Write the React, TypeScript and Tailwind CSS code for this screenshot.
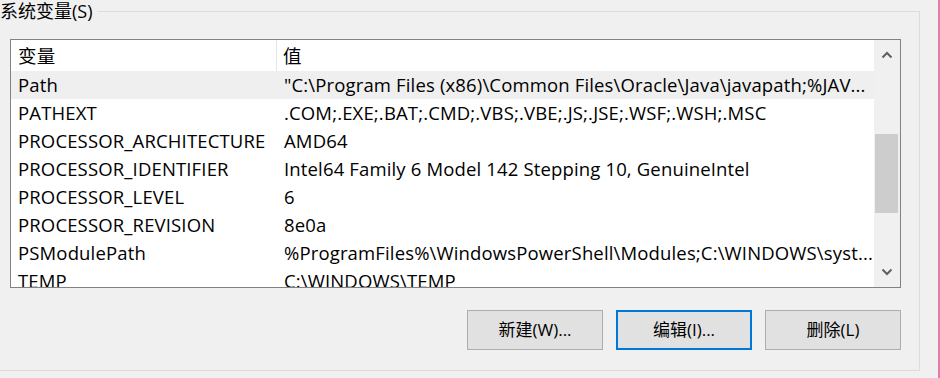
import React from 'react';

const rows: [string, string][] = [
    ['Path', String.raw`"C:\Program Files (x86)\Common Files\Oracle\Java\javapath;%JAV...`],
    ['PATHEXT', '.COM;.EXE;.BAT;.CMD;.VBS;.VBE;.JS;.JSE;.WSF;.WSH;.MSC'],
    ['PROCESSOR_ARCHITECTURE', 'AMD64'],
    ['PROCESSOR_IDENTIFIER', 'Intel64 Family 6 Model 142 Stepping 10, GenuineIntel'],
    ['PROCESSOR_LEVEL', '6'],
    ['PROCESSOR_REVISION', '8e0a'],
    ['PSModulePath', String.raw`%ProgramFiles%\WindowsPowerShell\Modules;C:\WINDOWS\syst...`],
    ['TEMP', String.raw`C:\WINDOWS\TEMP`],
];

const font = "font-['Segoe_UI','Open_Sans','Noto_Sans_CJK_SC',sans-serif]";

const Chevron: React.FC<{ up?: boolean }> = ({ up }) => (
    <svg width="12" height="8" viewBox="0 0 12 8" className={up ? '' : 'rotate-180'}>
        <path d="M1.5 6.5 L6 2 L10.5 6.5" fill="none" stroke="#606060" strokeWidth="2" />
    </svg>
);

const Button: React.FC<{ label: string; focused?: boolean }> = ({ label, focused }) => (
    <button
        className={
            'w-[136px] h-[40px] bg-[#e1e1e1] text-[17px] text-black ' +
            (focused ? 'border-2 border-[#0078d7]' : 'border border-[#adadad]')
        }
    >
        {label}
    </button>
);

const App: React.FC = () => {
    return (
        <div className={`w-[940px] h-[378px] bg-[#f0f0f0] flex overflow-hidden ${font} text-black`}>
            <div className="w-[938px] h-full">
                <fieldset className="w-[920px] h-[371px] border-t border-r border-b border-[#dcdcdc] pl-0">
                    <legend className="text-[18px] leading-[22px] pr-[5px] text-black">系统变量(S)</legend>
                    <div className="ml-[10px] mt-[17px] w-[891px] h-[249px] border border-[#828282] bg-white flex">
                        <div className="flex-1 overflow-hidden text-[18.5px] tracking-[0.15px]">
                            <div className="flex h-[31px] items-center">
                                <div className="w-[266px] h-full pl-[7px] flex items-center border-r border-[#e5e5e5]">变量</div>
                                <div className="pl-[6px]">值</div>
                            </div>
                            {rows.map(([name, value], i) => (
                                <div
                                    key={name}
                                    className={'flex h-[28px] items-center ' + (i === 0 ? 'bg-[#efefef]' : '')}
                                >
                                    <div className="w-[267px] pl-[7px] whitespace-nowrap overflow-hidden">{name}</div>
                                    <div className="flex-1 pl-[6px] pr-[6px] whitespace-nowrap overflow-hidden">{value}</div>
                                </div>
                            ))}
                        </div>
                        <div className="w-[26px] bg-[#f0f0f0] flex flex-col items-center">
                            <div className="h-[30px] flex items-center justify-center">
                                <Chevron up />
                            </div>
                            <div className="flex-1 w-full pl-[1px] pr-[2px] pt-[64px]">
                                <div className="h-[79px] bg-[#cdcdcd]" />
                            </div>
                            <div className="h-[30px] flex items-center justify-center">
                                <Chevron />
                            </div>
                        </div>
                    </div>
                    <div className="flex justify-end gap-[13px] w-[901px] mt-[22px]">
                        <Button label="新建(W)..." />
                        <Button label="编辑(I)..." focused />
                        <Button label="删除(L)" />
                    </div>
                </fieldset>
            </div>
            <div className="w-[2px] h-full bg-[#e07ca8]" />
        </div>
    );
};

export default App;
